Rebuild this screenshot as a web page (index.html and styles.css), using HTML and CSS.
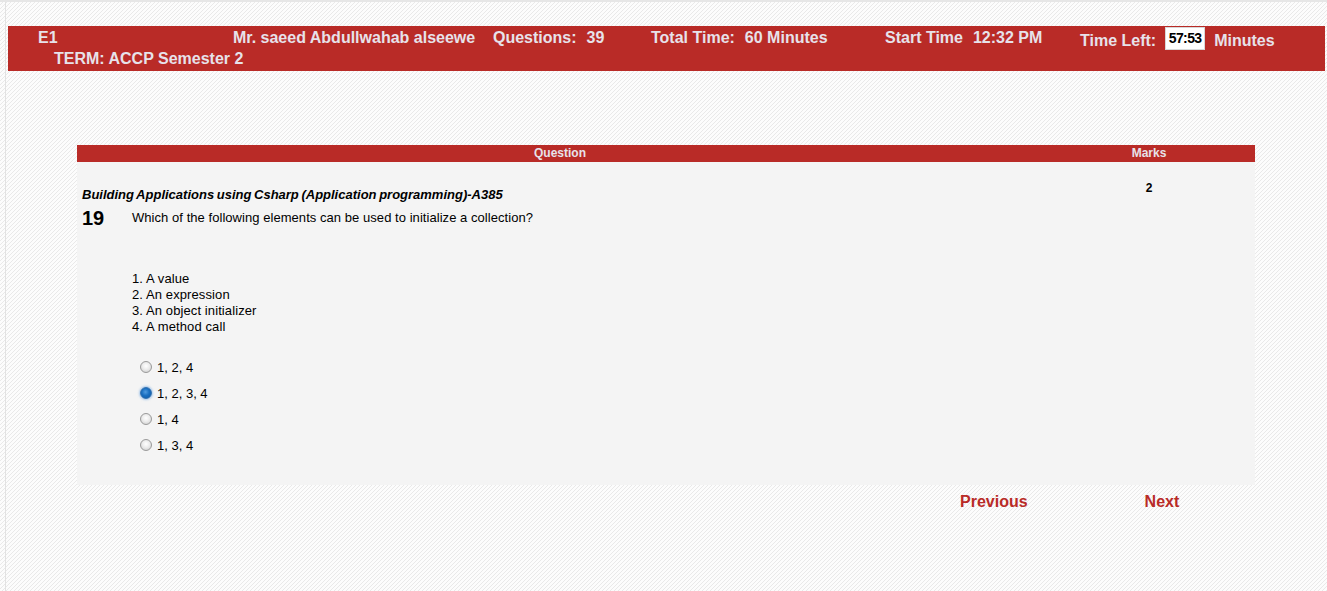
FILE: index.html
```html
<!DOCTYPE html>
<html lang="en">
<head>
<meta charset="utf-8">
<title>Online Exam</title>
<link rel="stylesheet" href="styles.css">
</head>
<body>
<div class="page">
  <header class="bar">
    <div class="row1">
      <div class="cell">E1</div>
      <div class="cell">Mr. saeed Abdullwahab alseewe</div>
      <div class="cell">Questions:<span class="v">39</span></div>
      <div class="cell">Total Time:<span class="v">60 Minutes</span></div>
      <div class="cell">Start Time<span class="v">12:32 PM</span></div>
      <div class="cell tl"><span class="lbl">Time Left:</span><span class="timer">57:53</span><span class="lbl mins">Minutes</span></div>
    </div>
    <div class="row2">TERM: ACCP Semester 2</div>
  </header>

  <main class="exam">
    <div class="thead">
      <div class="th">Question</div>
      <div class="th">Marks</div>
    </div>
    <div class="tbody">
      <div class="qcell">
        <div class="course">Building Applications using Csharp (Application programming)-A385</div>
        <div class="qrow">
          <div class="qnum">19</div>
          <div class="qtext">Which of the following elements can be used to initialize a collection?</div>
        </div>
        <div class="items">
          <div>1. A value</div>
          <div>2. An expression</div>
          <div>3. An object initializer</div>
          <div>4. A method call</div>
        </div>
        <div class="answers">
          <label class="ans"><input type="radio" name="a" class="radio"><span>1, 2, 4</span></label>
          <label class="ans"><input type="radio" name="a" class="radio" checked><span>1, 2, 3, 4</span></label>
          <label class="ans"><input type="radio" name="a" class="radio"><span>1, 4</span></label>
          <label class="ans"><input type="radio" name="a" class="radio"><span>1, 3, 4</span></label>
        </div>
      </div>
      <div class="mcell">2</div>
    </div>
    <nav class="pager">
      <a href="#" class="prev">Previous</a>
      <a href="#" class="next">Next</a>
    </nav>
  </main>
</div>
</body>
</html>
```

FILE: styles.css
```css
html {
  background-color: #fcfcfc;
  background-image: linear-gradient(135deg, #e9e9e9 0 20%, transparent 20% 50%, #e9e9e9 50% 70%, transparent 70% 100%);
  background-size: 4px 4px;
}

body {
  margin: 0;
  border-top: 2px solid #e6e6e6;
  font-family: "Liberation Sans", Arial, sans-serif;
  color: #000;
}

.page {
  margin-left: 5px;
  border-left: 1px solid #e2e2e2;
  min-height: 589px;
  padding-top: 24px;
  box-sizing: border-box;
}

.bar {
  margin: 0 2px 0 2px;
  height: 45px;
  background: #b92b27;
  color: #e7e2ea;
  font-weight: bold;
  font-size: 16px;
  line-height: 18px;
  padding-left: 30px;
  box-sizing: border-box;
}

.row1 {
  display: grid;
  grid-template-columns: 195px 260px 158px 234px 195px auto;
  align-items: start;
}

.cell {
  padding-top: 3px;
  white-space: nowrap;
}

.v {
  margin-left: 10px;
}

.tl {
  padding-top: 1px;
  display: flex;
  align-items: center;
}

.lbl {
  margin-top: 4px;
}

.timer {
  display: inline-block;
  width: 40px;
  height: 23px;
  box-sizing: border-box;
  margin-left: 9px;
  background: #fff;
  border: 1px solid #d8d8d8;
  color: #000;
  font-size: 14px;
  letter-spacing: -0.6px;
  line-height: 21px;
  text-align: center;
}

.mins {
  margin-left: 9px;
}

.row2 {
  padding-left: 16px;
}

.exam {
  width: 1178px;
  margin: 74px 0 0 71px;
}

.thead {
  display: grid;
  grid-template-columns: 966px 212px;
  background: #b92b27;
  height: 17px;
}

.th {
  color: #e7e2ea;
  font-weight: bold;
  font-size: 12px;
  line-height: 17px;
  text-align: center;
}

.tbody {
  display: grid;
  grid-template-columns: 966px 212px;
  background: #f4f4f4;
}

.qcell {
  padding: 25px 0 27px 5px;
  font-size: 13px;
  line-height: 15px;
}

.course {
  font-weight: bold;
  font-style: italic;
  word-spacing: -1px;
}

.qrow {
  display: flex;
  margin-top: 5px;
}

.qnum {
  width: 50px;
  font-size: 20px;
  font-weight: bold;
  line-height: 23px;
}

.qtext {
  padding-top: 3px;
  letter-spacing: 0.05px;
}

.items {
  margin-top: 41px;
  padding-left: 50px;
  line-height: 16px;
  letter-spacing: 0.1px;
}

.answers {
  margin-top: 19px;
  padding-left: 58px;
}

.ans {
  display: flex;
  align-items: center;
  height: 26px;
}

.radio {
  appearance: none;
  -webkit-appearance: none;
  width: 12px;
  height: 12px;
  margin: 0 5px 0 0;
  border: 1px solid #9a9a9a;
  border-radius: 50%;
  box-sizing: border-box;
  background: radial-gradient(circle at 50% 40%, #ffffff 0, #ececec 45%, #c9c9c9 100%);
}

.radio:checked {
  border-color: #2f6fb0;
  background: radial-gradient(circle at 45% 40%, #4f9be0 0, #1a6fc0 45%, #0b57a2 100%);
  box-shadow: 0 0 2px 1px rgba(110, 165, 225, 0.55);
}

.mcell {
  text-align: center;
  padding-top: 19px;
  font-size: 12px;
  font-weight: bold;
  line-height: 14px;
}

.pager {
  display: flex;
  margin-top: 8px;
  padding-left: 883px;
  font-size: 16px;
  font-weight: bold;
  line-height: 18px;
}

.pager a {
  color: #b92b27;
  text-decoration: none;
}

.next {
  margin-left: 117px;
}
```
